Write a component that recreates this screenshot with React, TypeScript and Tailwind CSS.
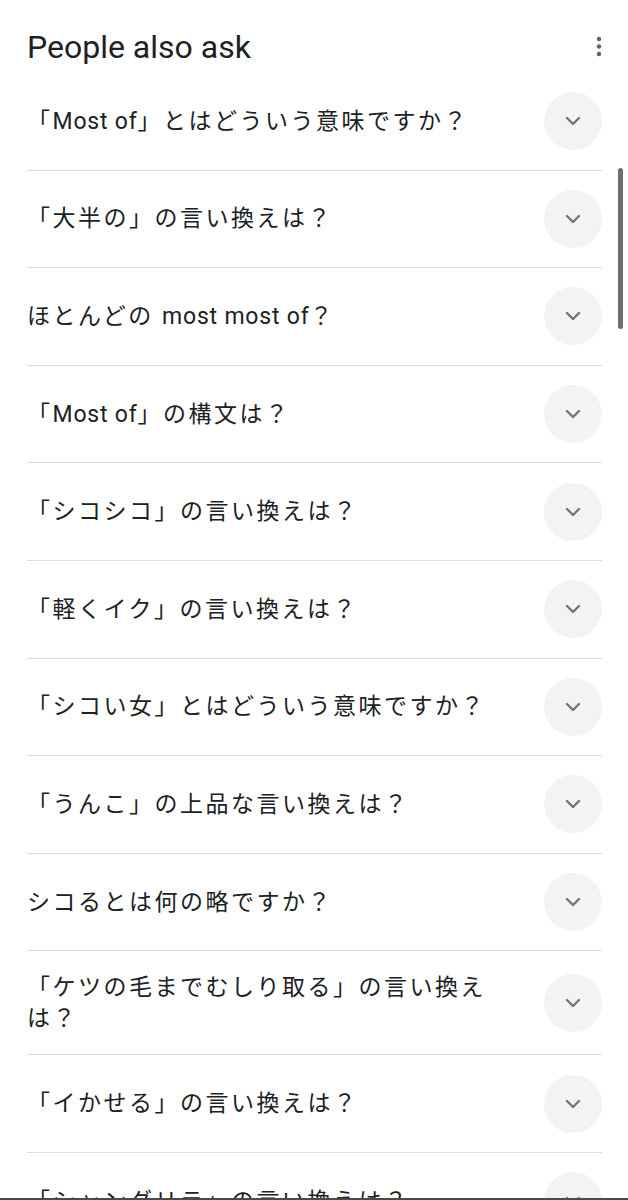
const questions = [
  '「Most of」とはどういう意味ですか？',
  '「大半の」の言い換えは？',
  'ほとんどの most most of？',
  '「Most of」の構文は？',
  '「シコシコ」の言い換えは？',
  '「軽くイク」の言い換えは？',
  '「シコい女」とはどういう意味ですか？',
  '「うんこ」の上品な言い換えは？',
  'シコるとは何の略ですか？',
  '「ケツの毛までむしり取る」の言い換えは？',
  '「イかせる」の言い換えは？',
  '「シャングリラ」の言い換えは？',
];

// latin runs get tighter tracking than the kana/kanji
function QuestionText({ text }: { text: string }) {
  const parts = text.split(/([A-Za-z][A-Za-z ]*[A-Za-z]|[A-Za-z])/);
  return (
    <p className="text-[23px] leading-[31px] tracking-[2.5px] text-[#202124] py-[20.5px]">
      {parts.map((part, i) =>
        /[A-Za-z]/.test(part) ? (
          <span key={i} className="tracking-[0.8px]">
            {part}
          </span>
        ) : (
          <span key={i}>{part}</span>
        )
      )}
    </p>
  );
}

function ChevronButton() {
  return (
    <div className="flex items-center justify-center w-[58px] h-[58px] rounded-full bg-[#f1f3f4] shrink-0">
      <svg width="16" height="10" viewBox="0 0 16 10" fill="none">
        <path
          d="M2 2l6 6 6-6"
          stroke="#70757a"
          strokeWidth="2.4"
          strokeLinecap="round"
          strokeLinejoin="round"
        />
      </svg>
    </div>
  );
}

export default function App() {
  return (
    <div
      className="relative h-[1200px] overflow-hidden bg-white border-b-2 border-[#4a4a4a]"
      style={{ fontFamily: 'Roboto, "Noto Sans CJK JP", sans-serif' }}
    >
      <div className="px-[27px]">
        <header className="flex items-start justify-between h-[73px] pt-[31px]">
          <h2 className="text-[32px] leading-none text-[#202124]">
            People also ask
          </h2>
          <svg width="6" height="22" viewBox="0 0 6 22" className="mr-[-1px] mt-[5px]">
            <circle cx="3" cy="3" r="2.2" fill="#5f6368" />
            <circle cx="3" cy="10.5" r="2.2" fill="#5f6368" />
            <circle cx="3" cy="18" r="2.2" fill="#5f6368" />
          </svg>
        </header>
        <ul className="mr-[-1px]">
          {questions.map((q) => (
            <li
              key={q}
              className="flex items-center justify-between min-h-[97.6px] border-b border-[#dadce0]"
            >
              <div className="flex-1 pr-[46px]">
                <QuestionText text={q} />
              </div>
              <ChevronButton />
            </li>
          ))}
        </ul>
      </div>
      {/* scrollbar thumb */}
      <div className="absolute left-[618px] top-[168px] w-[5px] h-[161px] rounded-full bg-[#6e6e6e]" />
    </div>
  );
}
